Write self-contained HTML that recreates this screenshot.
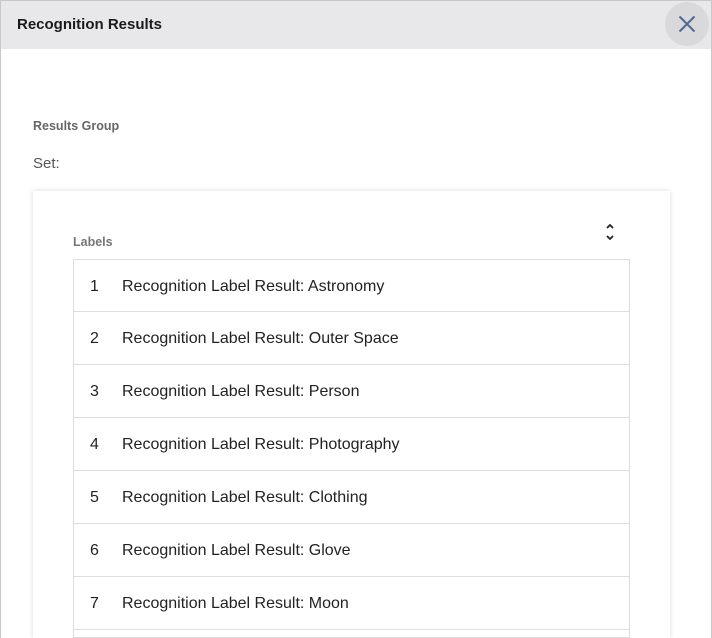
<!DOCTYPE html>
<html><head><style>
*{margin:0;padding:0;box-sizing:border-box}
html,body{width:712px;height:638px;overflow:hidden}
body{background:#fff;font-family:"Liberation Sans","Noto Sans CJK SC",sans-serif;position:relative}
.frame{position:absolute;left:0;top:0;width:712px;height:638px;border:1px solid #c8c8c8;border-bottom:none;z-index:5;pointer-events:none}
.hdr{position:absolute;left:1px;top:1px;width:710px;height:48px;background:#e8e8ea}
.hdr h1{position:absolute;left:16px;top:15px;font-size:15px;font-weight:bold;color:#1a1a1a}
.close{position:absolute;left:665px;top:2px;width:44px;height:44px;border-radius:50%;background:#d9d9dc}
.rg{position:absolute;left:33px;top:119px;font-size:12.5px;font-weight:bold;color:#666}
.set{position:absolute;left:33px;top:155px;font-size:15px;color:#555}
.card{position:absolute;left:33px;top:191px;width:637px;height:447px;background:#fff;box-shadow:0 0 5px rgba(0,0,0,.15);overflow:hidden}
.lab{position:absolute;left:40px;top:44px;font-size:12.5px;font-weight:bold;color:#777}
.tbl{position:absolute;left:40px;top:68px;width:557px;border:1px solid #ddd;border-bottom:none}
.row{height:53px;border-bottom:1px solid #ddd;font-size:16px;color:#222;line-height:54px;position:relative}
.row .n{position:absolute;left:16px}
.row .t{position:absolute;left:48px}
</style></head><body>
<div class="frame"></div>
<div class="hdr"><h1>Recognition Results</h1></div>
<div class="close"><svg width="44" height="44" viewBox="0 0 44 44"><path d="M14.5 14.5L29.5 29.5M29.5 14.5L14.5 29.5" stroke="#4d6a8f" stroke-width="2" fill="none"/></svg></div>
<div class="rg">Results Group</div>
<div class="set">Set:</div>
<div class="card">
<div class="lab">Labels</div>
<svg style="position:absolute;left:570px;top:31px" width="14" height="20" viewBox="0 0 14 20"><path d="M4 6L7 3L10 6M4 14L7 17L10 14" stroke="#222" stroke-width="1.8" fill="none"/></svg>
<div class="tbl">
<div class="row" style="height:52px"><span class="n">1</span><span class="t">Recognition Label Result: Astronomy</span></div>
<div class="row"><span class="n">2</span><span class="t">Recognition Label Result: Outer Space</span></div>
<div class="row"><span class="n">3</span><span class="t">Recognition Label Result: Person</span></div>
<div class="row"><span class="n">4</span><span class="t">Recognition Label Result: Photography</span></div>
<div class="row"><span class="n">5</span><span class="t">Recognition Label Result: Clothing</span></div>
<div class="row"><span class="n">6</span><span class="t">Recognition Label Result: Glove</span></div>
<div class="row"><span class="n">7</span><span class="t">Recognition Label Result: Moon</span></div>
<div class="row" style="height:8px"></div>
</div>
</div>
</body></html>
